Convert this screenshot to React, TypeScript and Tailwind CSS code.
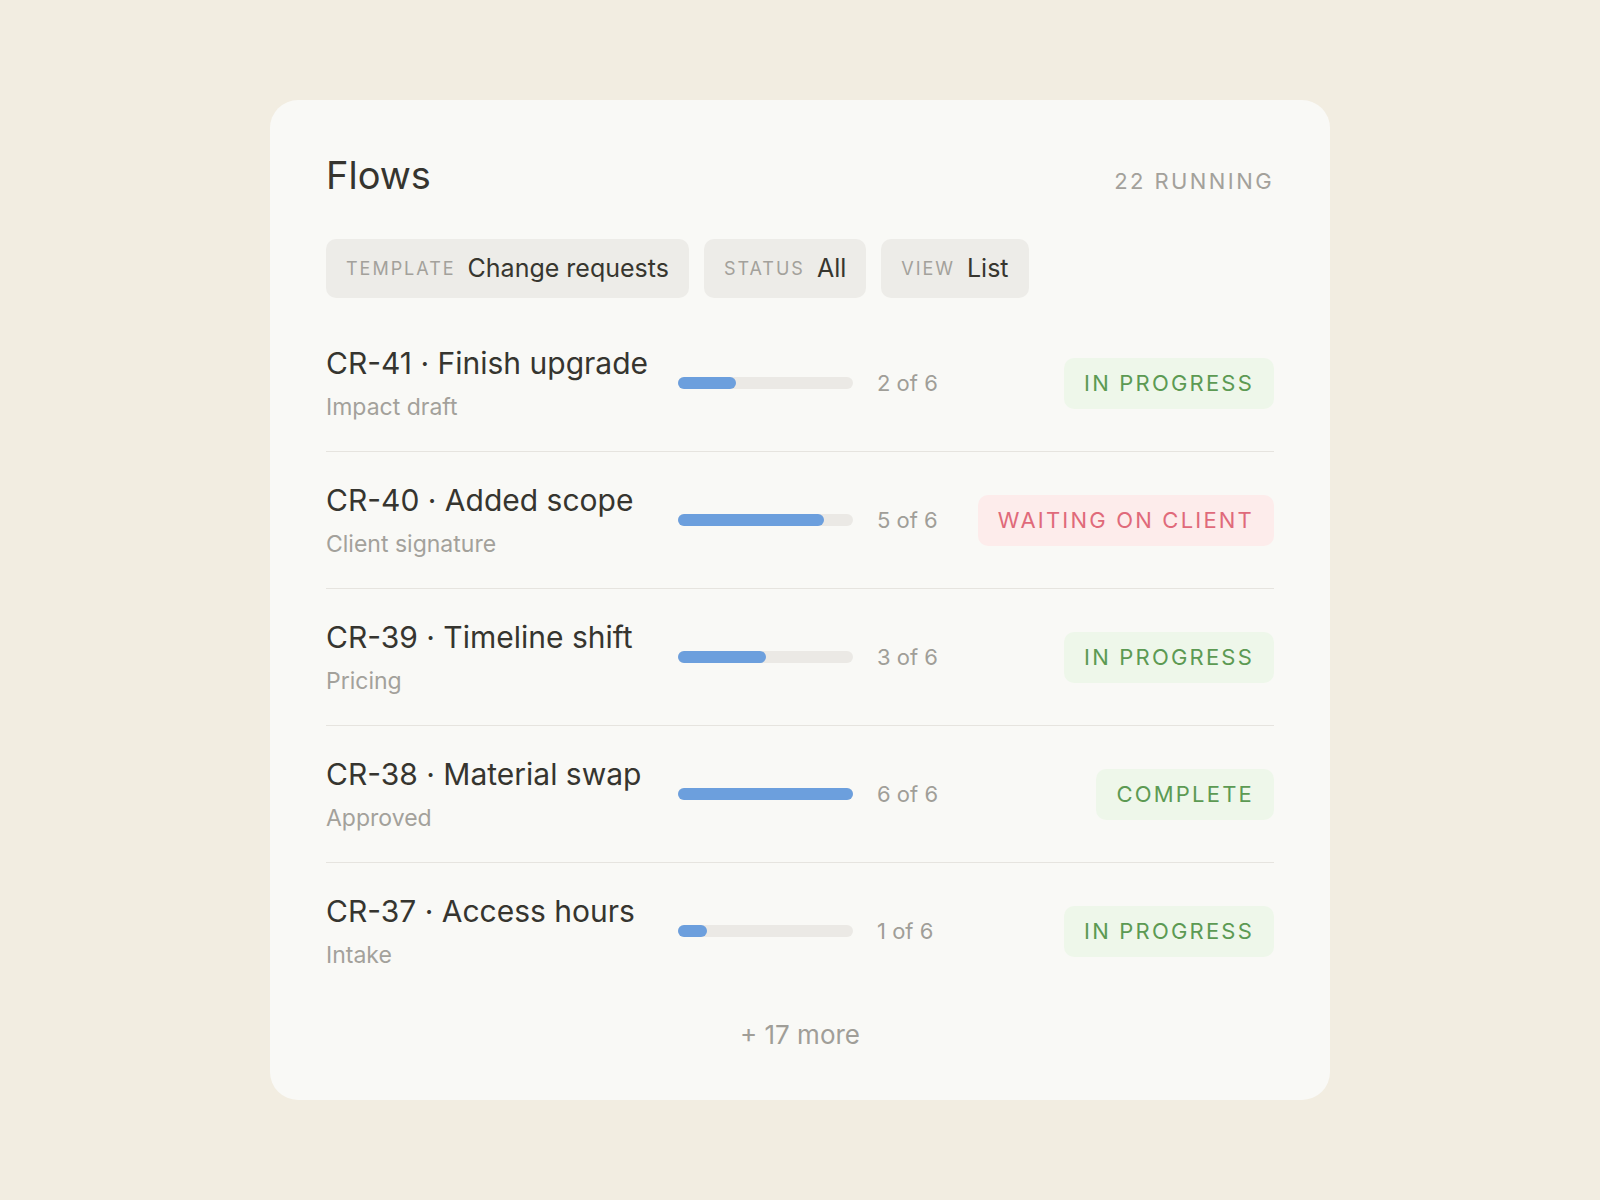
import React from "react";

type Flow = {
  id: string;
  title: string;
  step: string;
  done: number;
  status: "progress" | "waiting" | "complete";
};

const FLOWS: Flow[] = [
  { id: "CR-41", title: "Finish upgrade", step: "Impact draft", done: 2, status: "progress" },
  { id: "CR-40", title: "Added scope", step: "Client signature", done: 5, status: "waiting" },
  { id: "CR-39", title: "Timeline shift", step: "Pricing", done: 3, status: "progress" },
  { id: "CR-38", title: "Material swap", step: "Approved", done: 6, status: "complete" },
  { id: "CR-37", title: "Access hours", step: "Intake", done: 1, status: "progress" },
];

const TOTAL_STEPS = 6;

const Chip = ({ label, value }: { label: string; value: string }) => (
  <div className="flex h-[59px] items-center gap-3 rounded-[10px] bg-[#edece8] px-5">
    <span className="text-[18px] uppercase tracking-[0.11em] text-[#a3a19b]">{label}</span>
    <span className="text-[25px] text-[#37362f]">{value}</span>
  </div>
);

const StatusBadge = ({ status }: { status: Flow["status"] }) => {
  if (status === "waiting") {
    return (
      <span className="flex h-[51px] items-center rounded-[10px] bg-[#fdeceb] px-5 text-[22px] uppercase tracking-[0.1em] text-[#e06a7a]">
        Waiting on client
      </span>
    );
  }
  return (
    <span className="flex h-[51px] items-center rounded-[10px] bg-[#eef7ea] px-5 text-[22px] uppercase tracking-[0.1em] text-[#5c9a53]">
      {status === "complete" ? "Complete" : "In progress"}
    </span>
  );
};

const FlowRow = ({ flow, last }: { flow: Flow; last: boolean }) => (
  <div
    className={
      "grid grid-cols-[328px_175px_auto_1fr] items-center gap-x-6 py-[30px] " +
      (last ? "" : "border-b border-[#e6e4df]")
    }
  >
    <div className="flex flex-col gap-[12px]">
      <p className="whitespace-nowrap text-[30px] leading-[36px] text-[#36352f]">
        {flow.id} · {flow.title}
      </p>
      <p className="text-[23px] leading-[28px] text-[#a3a19b]">{flow.step}</p>
    </div>
    <div className="h-[12px] w-full rounded-full bg-[#ebe9e5]">
      <div
        className="h-full rounded-full bg-[#6c9fdd]"
        style={{ width: `${(flow.done / TOTAL_STEPS) * 100}%` }}
      />
    </div>
    <span className="text-[22px] text-[#a09e98]">
      {flow.done} of {TOTAL_STEPS}
    </span>
    <div className="flex justify-end">
      <StatusBadge status={flow.status} />
    </div>
  </div>
);

export default function App() {
  return (
    <div
      className="flex min-h-screen items-center justify-center bg-[#f2ede1]"
      style={{ fontFamily: "Inter, 'Liberation Sans', sans-serif" }}
    >
      <div className="w-[1060px] rounded-[28px] bg-[#f9f9f6] px-14 pb-[49px] pt-14">
        <div className="flex items-baseline justify-between">
          <h1 className="text-[38px] leading-[38px] text-[#36352f]">Flows</h1>
          <span className="text-[22px] uppercase tracking-[0.11em] text-[#a3a19b]">22 running</span>
        </div>

        <div className="mt-[41px] flex gap-[15px]">
          <Chip label="Template" value="Change requests" />
          <Chip label="Status" value="All" />
          <Chip label="View" value="List" />
        </div>

        <div className="mt-[17px] flex flex-col">
          {FLOWS.map((flow, i) => (
            <FlowRow key={flow.id} flow={flow} last={i === FLOWS.length - 1} />
          ))}
        </div>

        <p className="mt-[20px] text-center text-[26px] leading-[32px] text-[#a09e98]">+ 17 more</p>
      </div>
    </div>
  );
}
